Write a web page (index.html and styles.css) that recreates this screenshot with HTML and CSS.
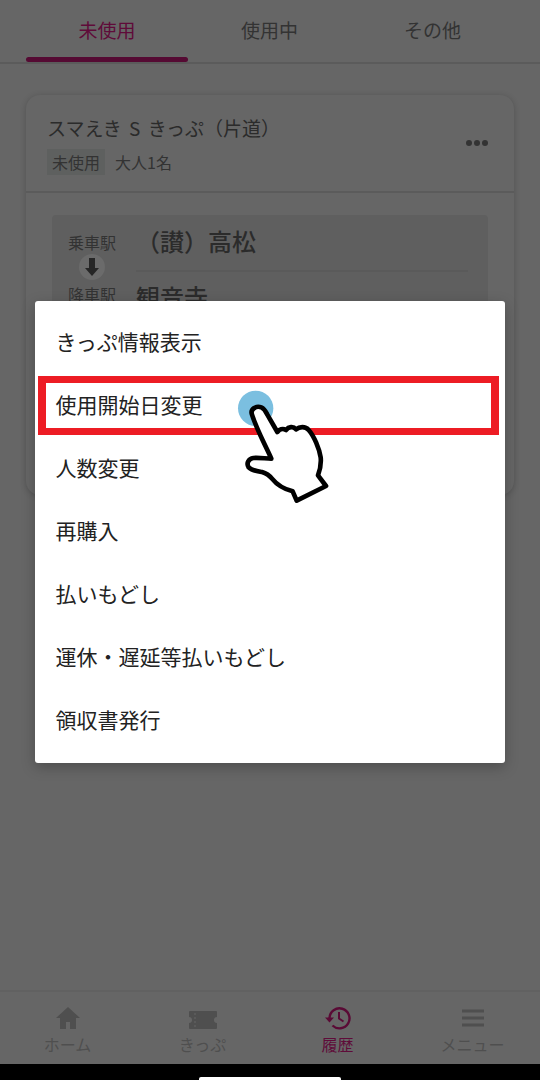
FILE: index.html
```html
<!DOCTYPE html>
<html lang="ja">

<head>
	<meta charset="UTF-8">
	<meta name="viewport" content="width=device-width, initial-scale=1.0">
	<title>履歴</title>
	<link rel="stylesheet" href="styles.css">
</head>

<body>

	<div class="screen">
		<div class="tabs">
			<div class="tab active">未使用</div>
			<div class="tab">使用中</div>
			<div class="tab">その他</div>
		</div>

		<div class="content">
			<div class="ticket-card">
				<div class="ticket-head">
					<div class="ticket-info">
						<div class="ticket-title">スマえき S きっぷ（片道）</div>
						<div class="ticket-meta">
							<span class="tag">未使用</span>
							<span>大人1名</span>
						</div>
					</div>
					<div class="more-dots"><i></i><i></i><i></i></div>
				</div>
				<div class="ticket-body">
					<div class="route">
						<div class="route-labels">
							<div>乗車駅</div>
							<div class="route-arrow">
								<svg width="14" height="18" viewBox="0 0 14 18">
									<path d="M4 0h6v10h4l-7 8-7-8h4z" fill="#262626" />
								</svg>
							</div>
							<div>降車駅</div>
						</div>
						<div class="route-stations">
							<div class="station from">（讃）高松</div>
							<div class="station">観音寺</div>
						</div>
					</div>
				</div>
			</div>
		</div>

		<div class="bottom-nav">
			<div class="nav-item">
				<svg width="26" height="24" viewBox="0 0 26 24">
					<path d="M13 1 1 12h4v11h6v-7h4v7h6V12h4z" fill="#4f4f4f" />
				</svg>
				<span>ホーム</span>
			</div>
			<div class="nav-item">
				<svg width="30" height="20" viewBox="0 0 30 20">
					<path d="M2 1h26a1 1 0 0 1 1 1v5a3 3 0 0 0 0 6v5a1 1 0 0 1-1 1H2a1 1 0 0 1-1-1v-5a3 3 0 0 0 0-6V2a1 1 0 0 1 1-1z" fill="#4f4f4f" />
					<path d="M7 3v15" stroke="#666" stroke-width="1" stroke-dasharray="2 2" />
				</svg>
				<span>きっぷ</span>
			</div>
			<div class="nav-item active">
				<svg width="28" height="24" viewBox="0 0 28 24" fill="none" stroke="#5a0a35" stroke-width="2.4">
					<path d="M5.5 12a10 10 0 1 1 3 7.5" />
					<path d="M1 11.5h9l-4.5 5z" fill="#5a0a35" stroke="none" />
					<path d="M15 6v6.5l4.5 3" stroke-width="2" />
				</svg>
				<span>履歴</span>
			</div>
			<div class="nav-item">
				<svg width="24" height="24" viewBox="0 0 24 24">
					<path d="M1 3.5h22v3H1zM1 10.5h22v3H1zM1 17.5h22v3H1z" fill="#4f4f4f" />
				</svg>
				<span>メニュー</span>
			</div>
		</div>

		<div class="dialog-layer">
			<div class="dialog">
				<div class="menu-item">きっぷ情報表示</div>
				<div class="menu-item marked">
					使用開始日変更
					<svg class="tap-hand" width="160" height="140" viewBox="0 0 480 420">
						<circle cx="167" cy="115" r="53" fill="#7bbfe0" />
						<path d="M156 134C150 118 168 106 184 112C194 116 198 126 202 134L232 186C238 178 248 174 258 180C266 170 280 168 288 178C298 170 316 168 326 180C342 198 358 236 362 262C364 282 360 300 354 316L378 348L290 392L278 364C254 358 232 346 216 326C208 316 200 310 186 306C172 304 156 302 146 292C138 280 146 266 160 264C176 262 198 266 214 266C194 222 170 178 156 134Z" fill="#fff" stroke="#000" stroke-width="14" stroke-linejoin="round" />
					</svg>
				</div>
				<div class="menu-item">人数変更</div>
				<div class="menu-item">再購入</div>
				<div class="menu-item">払いもどし</div>
				<div class="menu-item">運休・遅延等払いもどし</div>
				<div class="menu-item">領収書発行</div>
			</div>
		</div>
	</div>

	<div class="system-bar">
		<div class="home-pill"></div>
	</div>

</body>

</html>
```

FILE: styles.css
```css
* {
	box-sizing: border-box;
}

body {
	margin: 0;
	background-color: #000;
	font-family: "Noto Sans CJK JP", "Noto Sans", sans-serif;
	color: #2b2b2b;
}

.screen {
	position: relative;
	display: flex;
	flex-direction: column;
	height: 1064px;
	background-color: #666;
	overflow: hidden;
}

/* tabs */
.tabs {
	display: flex;
	height: 64px;
	padding: 0 26px;
	border-bottom: 2px solid #5b5b5b;
}

.tab {
	width: 163px;
	height: 62px;
	padding-top: 14px;
	text-align: center;
	font-size: 19px;
	line-height: 32px;
	color: #333;
}

.tab.active {
	width: 162px;
	color: #5f0b39;
}

.tab.active::after {
	content: "";
	display: block;
	height: 5px;
	margin-top: 11px;
	border-radius: 3px;
	background-color: #550a33;
}

/* ticket card */
.content {
	flex: 1;
	padding: 31px 26px 0;
}

.ticket-card {
	height: 400px;
	border-radius: 14px;
	background-color: #666;
	box-shadow: 0 1px 6px rgba(0, 0, 0, 0.2);
	overflow: hidden;
}

.ticket-head {
	display: flex;
	justify-content: space-between;
	align-items: center;
	height: 98px;
	padding: 0 26px 0 21px;
	border-bottom: 2px solid #5b5b5b;
}

.ticket-info {
	margin-top: 4px;
}

.ticket-title {
	margin-top: -1px;
	font-size: 19px;
	line-height: 28px;
	word-spacing: 3px;
	color: #2b2b2b;
}

.ticket-meta {
	display: flex;
	align-items: center;
	gap: 10px;
	margin-top: 7px;
	font-size: 16px;
	color: #333;
}

.tag {
	padding: 0 5px;
	line-height: 26px;
	background-color: #5e605f;
}

.more-dots {
	display: flex;
	gap: 2px;
}

.more-dots i {
	width: 6px;
	height: 6px;
	border-radius: 50%;
	background-color: #333;
}

.ticket-body {
	padding: 22px 26px;
}

.route {
	display: flex;
	height: 200px;
	padding: 14px 20px 0 12px;
	background-color: #5f5f5f;
	border-radius: 4px;
}

.route-labels {
	width: 56px;
	text-align: center;
	font-size: 16px;
	line-height: 26px;
	color: #333;
}

.route-arrow {
	display: flex;
	align-items: center;
	justify-content: center;
	width: 26px;
	height: 26px;
	margin: -1px auto 1px;
	border-radius: 50%;
	background-color: #6b6b6b;
}

.route-stations {
	flex: 1;
	margin-left: 16px;
}

.station {
	font-size: 24px;
	line-height: 28px;
	font-weight: 500;
	color: #2b2b2b;
}

.station.from {
	margin-top: -2px;
	padding-bottom: 15px;
	margin-bottom: 11px;
	border-bottom: 2px solid #5a5a5a;
}

/* bottom navigation */
.bottom-nav {
	display: flex;
	height: 74px;
	padding-top: 13px;
	border-top: 2px solid #616161;
}

.nav-item {
	display: flex;
	flex-direction: column;
	align-items: center;
	justify-content: flex-end;
	flex: 1;
	height: 49px;
	font-size: 16px;
	line-height: 20px;
	color: #4f4f4f;
}

.nav-item svg {
	display: block;
	margin-bottom: 4px;
}

.nav-item.active {
	color: #5f0b39;
}

/* dialog */
.dialog-layer {
	position: absolute;
	inset: 0;
	display: flex;
	align-items: center;
	justify-content: center;
}

.dialog {
	width: 470px;
	padding: 10px 0 11px;
	background-color: #fff;
	border-radius: 3px;
	box-shadow: 0 4px 14px rgba(0, 0, 0, 0.25);
}

.menu-item {
	position: relative;
	height: 63px;
	padding-left: 20.5px;
	font-size: 21px;
	line-height: 61px;
	color: #222;
}

.menu-item.marked::after {
	content: "";
	position: absolute;
	top: 2px;
	bottom: 2px;
	left: 3px;
	right: 6px;
	border-style: solid;
	border-width: 7px 8px;
	border-color: #ed1c24;
}

.tap-hand {
	position: absolute;
	left: 165px;
	top: -4px;
	z-index: 1;
}

/* android bar */
.system-bar {
	display: flex;
	align-items: flex-end;
	justify-content: center;
	height: 16px;
	background-color: #000;
}

.home-pill {
	width: 142px;
	height: 3px;
	background-color: #fff;
	border-radius: 2px 2px 0 0;
}
```
